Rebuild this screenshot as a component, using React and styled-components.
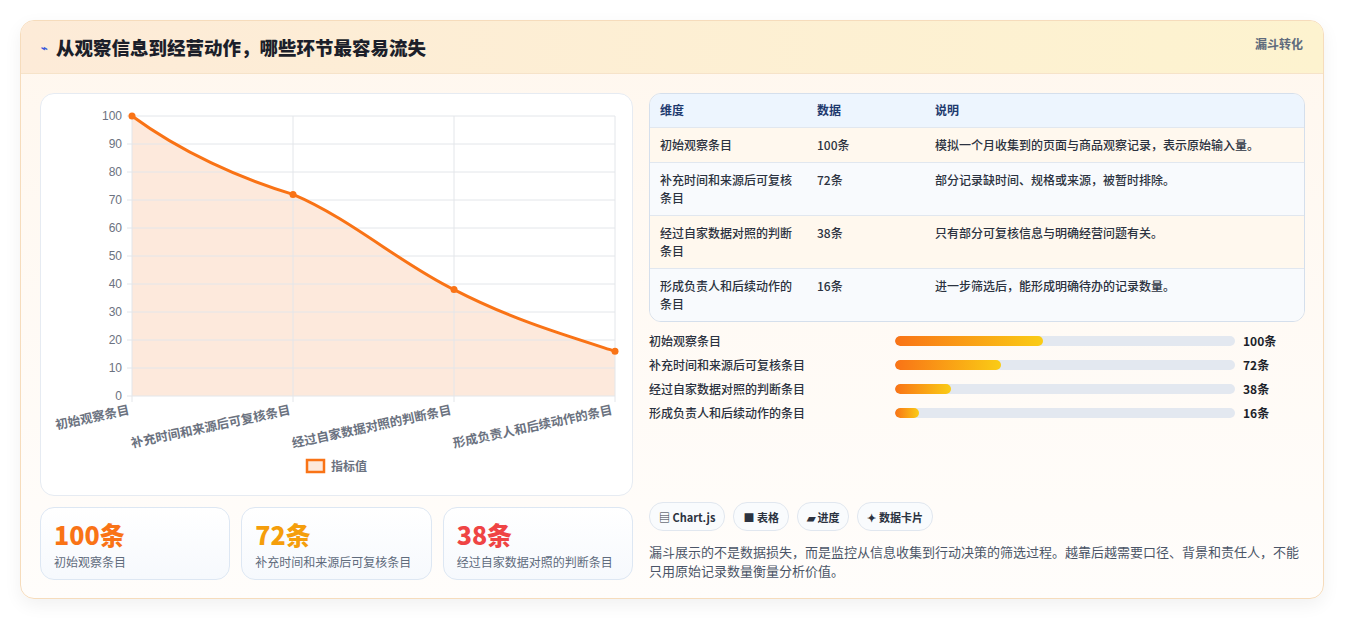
import React from "react";
import styled, { createGlobalStyle } from "styled-components";

const Global = createGlobalStyle`
  body { margin: 0; background: #fff; font-family: "Noto Sans CJK SC", "Noto Sans", sans-serif; }
`;

const rows = [
  { name: "初始观察条目", value: 100, note: "模拟一个月收集到的页面与商品观察记录，表示原始输入量。" },
  { name: "补充时间和来源后可复核条目", value: 72, note: "部分记录缺时间、规格或来源，被暂时排除。" },
  { name: "经过自家数据对照的判断条目", value: 38, note: "只有部分可复核信息与明确经营问题有关。" },
  { name: "形成负责人和后续动作的条目", value: 16, note: "进一步筛选后，能形成明确待办的记录数量。" },
];

const Page = styled.div`
  padding: 20px 21px 22px 20px;
`;
const Card = styled.div`
  border: 1px solid #f6dcbc;
  border-radius: 14px;
  overflow: hidden;
  background: linear-gradient(180deg, #fff7ee 0%, #fffdfb 100%);
  box-shadow: 0 6px 18px rgba(0, 0, 0, 0.06);
`;
const Header = styled.div`
  height: 52px;
  display: flex;
  align-items: center;
  justify-content: space-between;
  padding: 0 20px 0 20px;
  background: linear-gradient(90deg, #fdebd8 0%, #fdf3cf 100%);
  border-bottom: 1px solid #f6e3c9;
`;
const Title = styled.h1`
  margin: 0;
  font-size: 18.5px;
  font-weight: 800;
  color: #1c1f2a;
  display: flex;
  align-items: center;
  gap: 8px;
`;
const Tag = styled.span`
  font-size: 12px;
  font-weight: 700;
  color: #5f6b7c;
  align-self: flex-start;
  margin-top: 14px;
`;
const Body = styled.div`
  display: grid;
  grid-template-columns: 593px 1fr;
  gap: 16px;
  padding: 19px 18px 18px 19px;
`;
const Left = styled.div`
  display: flex;
  flex-direction: column;
  gap: 11px;
`;
const ChartCard = styled.div`
  height: 403px;
  background: #fff;
  border: 1px solid #e6ebf2;
  border-radius: 14px;
  box-sizing: border-box;
  overflow: hidden;
`;
const Stats = styled.div`
  display: grid;
  grid-template-columns: repeat(3, 1fr);
  gap: 11px;
`;
const Stat = styled.div`
  height: 73px;
  box-sizing: border-box;
  border: 1px solid #dde7f3;
  border-radius: 14px;
  background: linear-gradient(180deg, #fff 0%, #f6f9fd 100%);
  padding: 10px 13px;
`;
const StatNum = styled.div`
  font-size: 25px;
  font-weight: 800;
  line-height: 33px;
  color: ${(p) => p.$color};
`;
const StatLabel = styled.div`
  font-size: 12px;
  color: #5f6b7c;
  margin-top: 2px;
`;
const Right = styled.div`
  display: flex;
  flex-direction: column;
`;
const Table = styled.div`
  border: 1px solid #d5dfec;
  border-radius: 12px;
  overflow: hidden;
  font-size: 12px;
  font-weight: 500;
  color: #2b3240;
`;
const Row = styled.div`
  display: grid;
  grid-template-columns: 157px 118px 1fr;
  padding: 0 10px;
  min-height: ${(p) => p.$h}px;
  box-sizing: border-box;
  align-items: start;
  padding-top: ${(p) => (p.$head ? 7 : 8)}px;
  background: ${(p) => (p.$head ? "#edf5fe" : p.$alt ? "#f8fafd" : "#fff8ee")};
  color: ${(p) => (p.$head ? "#1e3a6e" : "#2b3240")};
  font-weight: ${(p) => (p.$head ? 700 : 500)};
  border-top: ${(p) => (p.$head ? "none" : "1px solid #e1e7ef")};
  line-height: 18px;
  & > span:first-child { padding-right: 18px; }
`;
const Bars = styled.div`
  display: flex;
  flex-direction: column;
  gap: 7px;
  margin-top: 10px;
`;
const BarRow = styled.div`
  display: grid;
  grid-template-columns: 246px 340px 1fr;
  align-items: center;
  font-size: 12px;
  font-weight: 500;
  color: #2b3240;
  height: 17px;
`;
const Track = styled.div`
  height: 10px;
  border-radius: 5px;
  background: #e3e8f0;
  overflow: hidden;
`;
const Fill = styled.div`
  height: 100%;
  border-radius: 5px;
  background: linear-gradient(90deg, #f97316, #facc15);
`;
const BarVal = styled.span`
  padding-left: 8px;
  font-weight: 700;
  color: #1c1f2a;
`;
const Chips = styled.div`
  margin-top: auto;
  display: flex;
  gap: 8px;
`;
const Chip = styled.span`
  height: 27px;
  padding: 0 9px;
  border: 1px solid #e1e7ef;
  border-radius: 14px;
  background: #f9fbfd;
  font-size: 11px;
  font-weight: 700;
  color: #2b3240;
  display: flex;
  align-items: center;
  gap: 3px;
`;
const Note = styled.p`
  margin: 11px 0 0;
  font-size: 13px;
  line-height: 19px;
  color: #4b5567;
`;

const X = [91, 252, 413, 574];
const yOf = (v) => 22 + (280 * (100 - v)) / 100;

const Chart = () => {
  const pts = rows.map((r, i) => [X[i], yOf(r.value)]);
  const d = `M${pts[0][0]},${pts[0][1]} C140,58 200,85 ${pts[1][0]},${pts[1][1]} C310,125 360,170 ${pts[2][0]},${pts[2][1]} C470,225 520,240 ${pts[3][0]},${pts[3][1]}`;
  return (
    <svg width="593" height="403" style={{ display: "block" }}>
      <path d={`${d} L574,302 L91,302 Z`} fill="#fde9dc" />
      {Array.from({ length: 11 }, (_, i) => (
        <g key={i}>
          <line x1="86" x2="574" y1={yOf(i * 10)} y2={yOf(i * 10)} stroke="#e3e6ea" />
          <text x="81" y={yOf(i * 10) + 4} textAnchor="end" fontSize="12" fill="#6b7280" fontFamily="Liberation Sans, sans-serif">
            {i * 10}
          </text>
        </g>
      ))}
      {X.map((x) => (
        <line key={x} x1={x} x2={x} y1="22" y2="308" stroke="#e3e6ea" />
      ))}
      <path d={d} fill="none" stroke="#f97316" strokeWidth="3" />
      {pts.map(([x, y]) => (
        <circle key={x} cx={x} cy={y} r="3.5" fill="#f97316" />
      ))}
      {rows.map((r, i) => (
        <text key={r.name} x={X[i] - 2} y="320" textAnchor="end" fontSize="12.5" fontWeight="600" fill="#6b7280" transform={`rotate(-12 ${X[i] - 2} 320)`}>
          {r.name}
        </text>
      ))}
      <rect x="266" y="366" width="17" height="12" fill="#fde9dc" stroke="#f97316" strokeWidth="2.5" />
      <text x="290" y="377" fontSize="12" fontWeight="600" fill="#6b7280">指标值</text>
    </svg>
  );
};

export default function App() {
  return (
    <Page>
      <Global />
      <Card>
        <Header>
          <Title>
            <span style={{ color: "#3b5bdb", fontSize: 11 }}>⌁</span>
            从观察信息到经营动作，哪些环节最容易流失
          </Title>
          <Tag>漏斗转化</Tag>
        </Header>
        <Body>
          <Left>
            <ChartCard>
              <Chart />
            </ChartCard>
            <Stats>
              <Stat><StatNum $color="#f97316">100条</StatNum><StatLabel>初始观察条目</StatLabel></Stat>
              <Stat><StatNum $color="#f59e0b">72条</StatNum><StatLabel>补充时间和来源后可复核条目</StatLabel></Stat>
              <Stat><StatNum $color="#ef4444">38条</StatNum><StatLabel>经过自家数据对照的判断条目</StatLabel></Stat>
            </Stats>
          </Left>
          <Right>
            <Table>
              <Row $head $h={33}><span>维度</span><span>数据</span><span>说明</span></Row>
              {rows.map((r, i) => (
                <Row key={r.name} $alt={i % 2 === 1} $h={i === 0 ? 35 : 53}>
                  <span>{r.name}</span><span>{r.value}条</span><span>{r.note}</span>
                </Row>
              ))}
            </Table>
            <Bars>
              {rows.map((r) => (
                <BarRow key={r.name}>
                  <span>{r.name}</span>
                  <Track><Fill style={{ width: `${r.value * 0.435}%` }} /></Track>
                  <BarVal>{r.value}条</BarVal>
                </BarRow>
              ))}
            </Bars>
            <Chips>
              <Chip>▤ Chart.js</Chip>
              <Chip>■ 表格</Chip>
              <Chip>▰ 进度</Chip>
              <Chip>✦ 数据卡片</Chip>
            </Chips>
            <Note>漏斗展示的不是数据损失，而是监控从信息收集到行动决策的筛选过程。越靠后越需要口径、背景和责任人，不能只用原始记录数量衡量分析价值。</Note>
          </Right>
        </Body>
      </Card>
    </Page>
  );
}
